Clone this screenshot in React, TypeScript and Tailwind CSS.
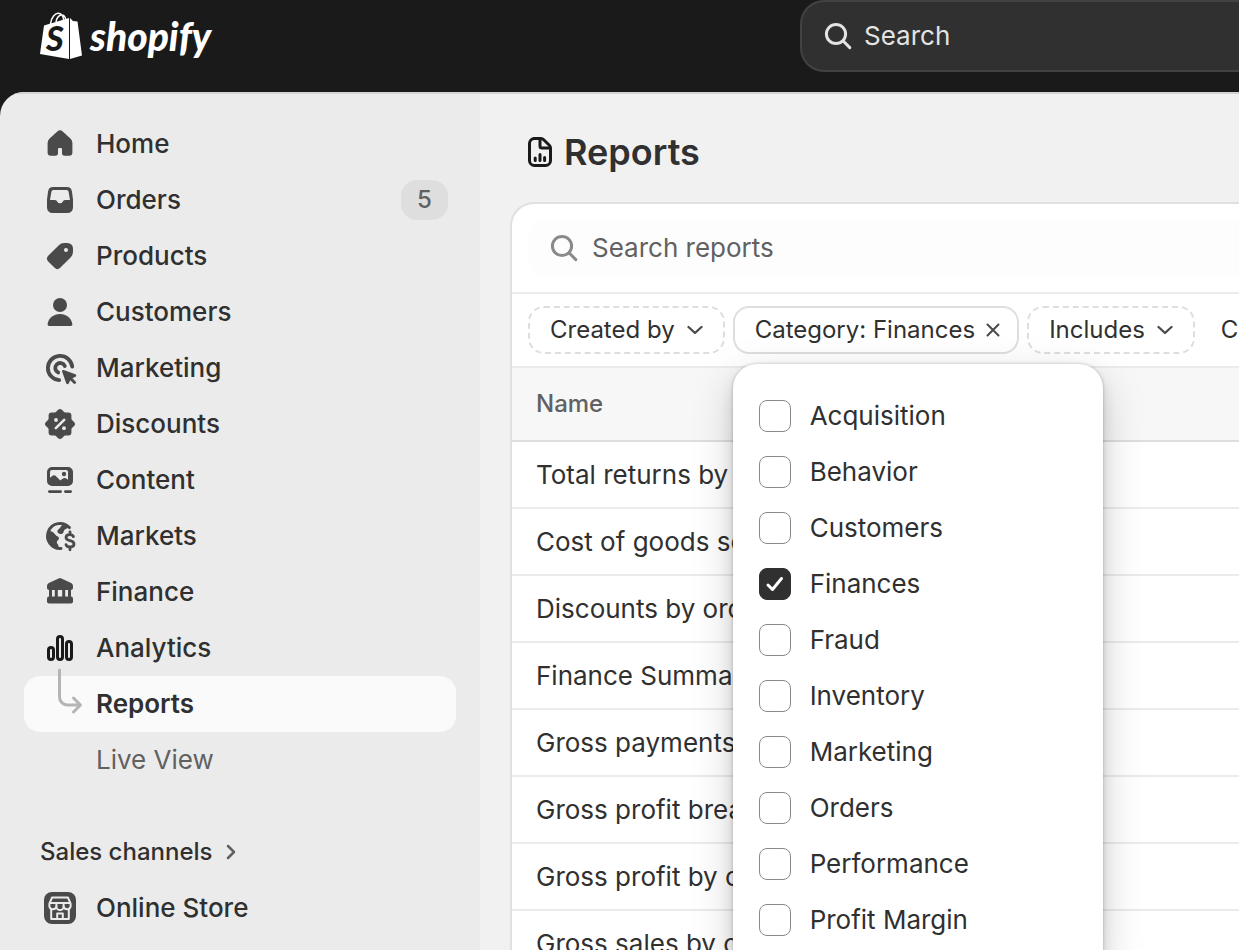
import { useState, type ReactNode } from 'react';

function Icon({ children, className = '' }: { children: ReactNode; className?: string }) {
  return (
    <svg viewBox="0 0 20 20" aria-hidden="true" className={`size-10 shrink-0 overflow-visible ${className}`} fill="currentColor">
      {children}
    </svg>
  );
}

const line = { fill: 'none', stroke: 'currentColor', strokeWidth: 1.5, strokeLinecap: 'round', strokeLinejoin: 'round' } as const;

const icons: Record<string, ReactNode> = {
  home: (
    <path d="M8.65 3.7a2 2 0 0 1 2.7 0l3.85 3.55a3 3 0 0 1 1 2.2v4.8a1.6 1.6 0 0 1-1.6 1.6h-2.3a1.3 1.3 0 0 1-1.3-1.3v-2.1a.5.5 0 0 0-.5-.5h-1a.5.5 0 0 0-.5.5v2.1a1.3 1.3 0 0 1-1.3 1.3h-2.3a1.6 1.6 0 0 1-1.6-1.6v-4.8a3 3 0 0 1 1-2.2z" />
  ),
  orders: (
    <path
      fillRule="evenodd"
      d="M6.6 3.5h6.8a2.6 2.6 0 0 1 2.57 2.2l.5 3.8.03.7v3.55a2.75 2.75 0 0 1-2.75 2.75h-7.5a2.75 2.75 0 0 1-2.75-2.75v-3.55l.03-.7.5-3.8a2.6 2.6 0 0 1 2.57-2.2zM6.7 5h6.6a1 1 0 0 1 1 .85l.7 4.15h-2.5a1.2 1.2 0 0 0-1.1.75 1.52 1.52 0 0 1-2.8 0 1.2 1.2 0 0 0-1.1-.75h-2.5l.7-4.15a1 1 0 0 1 1-.85z"
    />
  ),
  products: (
    <path
      fillRule="evenodd"
      d="M9.3 4.7a4 4 0 0 1 2.8-1.2h1.65a2.75 2.75 0 0 1 2.75 2.75v1.65a4 4 0 0 1-1.2 2.8l-5.2 5.2a2 2 0 0 1-2.8 0l-3.2-3.2a2 2 0 0 1 0-2.8zM13 8a1 1 0 1 0 0-2 1 1 0 0 0 0 2z"
    />
  ),
  customers: (
    <>
      <circle cx="10" cy="6.5" r="3.5" />
      <path d="M3.8 16.1c.4-3 3-5.1 6.2-5.1s5.8 2.1 6.2 5.1a.8.8 0 0 1-.8.9h-10.8a.8.8 0 0 1-.8-.9z" />
    </>
  ),
  marketing: (
    <>
      <path {...line} strokeWidth="1.9" d="M16.1 9.3a6.1 6.1 0 1 0-6.5 6.8" />
      <path {...line} strokeWidth="1.9" d="M12.4 9a2.5 2.5 0 1 0-3.3 3.3" />
      <path d="M11.8 11.02l5.9 2.05c.55.2.6.95.05 1.25l-1.55.8 1.6 1.65a.7.7 0 0 1-1 1l-1.65-1.6-.8 1.55c-.3.55-1.05.5-1.25-.05l-2.05-5.9a.6.6 0 0 1 .75-.75z" />
    </>
  ),
  discounts: (
    <>
      <rect x="4.3" y="4.3" width="11.4" height="11.4" rx="1.5" />
      <rect x="4.3" y="4.3" width="11.4" height="11.4" rx="1.5" transform="rotate(45 10 10)" />
      <path d="M7.9 12.1l4.2-4.2" stroke="#ebebeb" strokeWidth="1.3" strokeLinecap="round" />
      <circle cx="8" cy="8" r=".95" fill="#ebebeb" />
      <circle cx="12" cy="12.1" r=".95" fill="#ebebeb" />
    </>
  ),
  content: (
    <>
      <path
        fillRule="evenodd"
        d="M6 3.5h8a2.5 2.5 0 0 1 2.5 2.5v4.5a2.5 2.5 0 0 1-2.5 2.5h-8a2.5 2.5 0 0 1-2.5-2.5v-4.5a2.5 2.5 0 0 1 2.5-2.5zM6 5a1 1 0 0 0-1 1v2.9l.95-.8a1.6 1.6 0 0 1 2.2.1l2 2.1 1.1-.9a1.7 1.7 0 0 1 2.1 0l.65.5v-3.9a1 1 0 0 0-1-1z"
      />
      <circle cx="12" cy="7" r="1.1" />
      <path {...line} strokeWidth="1.4" d="M4.7 15.8h5.6M12.7 15.8h2.6" />
    </>
  ),
  markets: (
    <>
      <path {...line} d="M14.7 5.8a6.25 6.25 0 1 0-4.2 10.4" />
      <path d="M4 7.2c1.6.2 3 .9 3.6 2 .5.9 1.8.8 1.9 1.9 0 1-1.2 1.1-1.1 2.1.1.8.9 1 .9 2v1.3C5.8 16.4 3.2 13.6 3.4 10z" />
      <path d="M13.4 4c-1.3.1-2.7.5-3.2 1.6-.3.7-1.6 1.1-1.5 2.2.1 1.3 1.8 1.5 2.6.9.7-.5.4-1.3 1-1.8.7-.6 1.7-.8 2.1-1.7z" />
      <path {...line} strokeWidth="1.4" d="M16.7 10.3c-.3-.7-1-1-1.8-1-1.1 0-1.9.6-1.9 1.5 0 2.2 4 .9 4 3.2 0 1-.9 1.5-2 1.5-1 0-1.8-.4-2-1.2M15 9.2v-1.3M15 15.6v1.3" />
    </>
  ),
  finance: (
    <>
      <path d="M9.3 3.2a1.6 1.6 0 0 1 1.4 0l4.9 2.3a1.6 1.6 0 0 1 .9 1.45v.8a1.25 1.25 0 0 1-1.25 1.25h-10.5a1.25 1.25 0 0 1-1.25-1.25v-.8a1.6 1.6 0 0 1 .9-1.45z" />
      <path d="M4.5 8.5h1.5v4.5h-1.5zM7.4 8.5h1.5v4.5h-1.5zM11.1 8.5h1.5v4.5h-1.5zM14 8.5h1.5v4.5h-1.5z" />
      <rect x="3.5" y="12.3" width="13" height="3.5" rx="1" />
    </>
  ),
  analytics: (
    <g {...line} className="text-[#1a1a1a]">
      <rect x="4.25" y="9.75" width="2.5" height="6" rx="1.25" />
      <rect x="8.75" y="4.25" width="2.5" height="11.5" rx="1.25" />
      <rect x="13.25" y="6.75" width="2.5" height="9" rx="1.25" />
    </g>
  ),
  store: (
    <>
      <rect x="2" y="2" width="16" height="16" rx="4" />
      <g {...line} stroke="#ebebeb" strokeWidth="1">
        <path d="M6 4.8h8l1.3 3v1.4a1.8 1.8 0 0 1-3.5 0 1.8 1.8 0 0 1-3.6 0 1.8 1.8 0 0 1-3.5 0v-1.4z" />
        <path d="M5.2 7.5h9.6M8.2 7.5v1.7M11.8 7.5v1.7M5.6 10.7v4.8h8.8v-4.8M8.6 15.3v-2.6h2.8v2.6" />
      </g>
    </>
  ),
};

const nav = [
  { icon: 'home',      label: 'Home' },
  { icon: 'orders',    label: 'Orders', count: 5 },
  { icon: 'products',  label: 'Products' },
  { icon: 'customers', label: 'Customers' },
  { icon: 'marketing', label: 'Marketing' },
  { icon: 'discounts', label: 'Discounts' },
  { icon: 'content',   label: 'Content' },
  { icon: 'markets',   label: 'Markets' },
  { icon: 'finance',   label: 'Finance' },
  { icon: 'analytics', label: 'Analytics' },
];

const reports = [
  'Total returns by order',
  'Cost of goods sold',
  'Discounts by order',
  'Finance Summary',
  'Gross payments',
  'Gross profit breakdown',
  'Gross profit by order',
  'Gross sales by order',
];

const categories = [
  'Acquisition', 'Behavior', 'Customers', 'Finances', 'Fraud',
  'Inventory', 'Marketing', 'Orders', 'Performance', 'Profit Margin',
];

function SearchIcon({ className }: { className: string }) {
  return (
    <Icon className={className}>
      <path {...line} d="M13.8 9a4.8 4.8 0 1 1-9.6 0 4.8 4.8 0 0 1 9.6 0zM12.6 12.5l3.3 3.3" />
    </Icon>
  );
}

function Chevron() {
  return (
    <svg viewBox="0 0 16 10" aria-hidden="true" className="h-[10px] w-4 shrink-0 text-[#4a4a4a]">
      <path {...line} strokeWidth="2.3" d="M1.5 2l6.5 6 6.5-6" />
    </svg>
  );
}

function Logo() {
  return (
    <a href="#" className="flex items-start gap-2 text-white">
      <svg viewBox="0 0 42 48" aria-hidden="true" className="h-12 w-[42px]">
        <path d="M4 13.5L29 6v41L0 42z" fill="currentColor" />
        <path d="M30 6l3 3 4.5.6L42 43.5 30 47z" fill="currentColor" />
        <path d="M10.5 12C11 5 15.5 1 18.5 1.2c4 .3 5 4 5.2 7.3M16 10c.5-4 3-7 5.500-7 2.8 0 4 2.5 4.2 5" fill="none" stroke="currentColor" strokeWidth="1.5" />
        <text x="6" y="39" fill="#1a1a1a" className="font-[Lato,sans-serif] text-[34px] font-black italic">S</text>
      </svg>
      <span className="font-[Lato,sans-serif] text-[39px] leading-[49px] font-black italic">shopify</span>
    </a>
  );
}

function Sidebar() {
  return (
    <nav className="w-[480px] shrink-0 bg-[#ebebeb] px-6 pt-6 shadow-[inset_0_2px_0_#d4d4d4]">
      <ul className="font-[550]">
        {nav.map(item => (
          <li key={item.label}>
            <a href="#" className="flex h-14 items-center gap-4 px-4">
              <Icon className="text-[#4a4a4a]">{icons[item.icon]}</Icon>
              <span className="flex-1">{item.label}</span>
              {item.count && (
                <span className="-mr-2 flex h-10 w-[47px] items-center justify-center rounded-2xl bg-[#dedede] text-2xl text-[#616161]">
                  {item.count}
                </span>
              )}
            </a>
          </li>
        ))}
        <li>
          <a href="#" className="flex h-14 items-center gap-4 rounded-2xl bg-[#fafafa] px-4 font-semibold">
            {/* Connector from Analytics */}
            <svg viewBox="0 0 40 40" aria-hidden="true" className="size-10 overflow-visible text-[#b5b5b5]">
              <path {...line} strokeWidth="3" d="M19.5-14v27a8 8 0 0 0 8 8h12m-6-7l7 7-7 7" />
            </svg>
            Reports
          </a>
        </li>
        <li>
          <a href="#" className="flex h-14 items-center pl-[72px] font-normal text-[#616161]">Live View</a>
        </li>
      </ul>

      <button className="mt-9 flex h-14 items-center gap-[14px] px-4 text-2xl font-[550]">
        Sales channels
        <svg viewBox="0 0 10 16" aria-hidden="true" className="h-4 w-[10px] text-[#616161]">
          <path {...line} strokeWidth="2.5" d="M2 2l6 6-6 6" />
        </svg>
      </button>
      <a href="#" className="flex h-14 items-center gap-4 px-4 font-[550]">
        <Icon className="text-[#4a4a4a]">{icons.store}</Icon>
        Online Store
      </a>
    </nav>
  );
}

function CategoryMenu({ selected, onToggle }: { selected: string[]; onToggle: (name: string) => void }) {
  return (
    <div className="absolute top-[58px] left-0 z-10 w-[370px] rounded-3xl bg-white px-[26px] py-6 text-[26px] shadow-[0_0_3px_rgba(0,0,0,0.25),0_8px_14px_rgba(0,0,0,0.12),0_14px_44px_rgba(0,0,0,0.18)]">
      {categories.map(name => (
        <label key={name} className="flex h-14 items-center gap-[19px]">
          <span className="relative flex size-8 shrink-0">
            <input
              type="checkbox"
              checked={selected.includes(name)}
              onChange={() => onToggle(name)}
              className="peer size-8 appearance-none rounded-lg border border-[#8a8a8a] bg-white checked:border-[#303030] checked:bg-[#303030]"
            />
            <svg viewBox="0 0 32 32" aria-hidden="true" className="pointer-events-none absolute inset-0 hidden text-white peer-checked:block">
              <path {...line} strokeWidth="3" d="M9 17l4.5 4.5 9-11" />
            </svg>
          </span>
          {name}
        </label>
      ))}
    </div>
  );
}

export default function App() {
  const [selected, setSelected] = useState<string[]>(['Finances']);

  const toggle = (name: string) =>
    setSelected(s => (s.includes(name) ? s.filter(n => n !== name) : [...s, name]));

  return (
    <div className="flex h-screen flex-col overflow-hidden bg-[#1a1a1a] font-[Inter,sans-serif] text-[26px] leading-10 font-normal text-[#303030]">

      {/* Top bar */}
      <header className="flex h-[92px] shrink-0 items-start">
        <div className="w-[800px] shrink-0 pt-3 pl-10"><Logo /></div>
        <label className="flex h-[72px] min-w-0 flex-1 items-center gap-[6px] rounded-l-3xl border-2 border-r-0 border-[#424242] bg-[#303030] pl-4">
          <SearchIcon className="text-[#e3e3e3]" />
          <input
            type="search"
            aria-label="Search"
            placeholder="Search"
            className="min-w-0 flex-1 bg-transparent text-[#e3e3e3] outline-none placeholder:text-[#e3e3e3]"
          />
        </label>
      </header>

      <div className="flex min-h-0 flex-1 overflow-hidden rounded-tl-3xl">
        <Sidebar />

        <main className="min-w-0 flex-1 bg-[#f1f1f1] pt-10 pl-[30px] shadow-[inset_0_2px_0_#d4d4d4]">
          <h1 className="flex items-center gap-1 pl-[10px] text-4xl leading-10 font-semibold">
            <Icon className="text-[#1a1a1a]">
              <g {...line}>
                <path d="M6.75 3.25h3.7a2 2 0 0 1 1.4.6l2.8 2.8a2 2 0 0 1 .6 1.4v6.2a2.5 2.5 0 0 1-2.5 2.5h-5.5a2.5 2.5 0 0 1-2.5-2.5v-8.5a2.5 2.5 0 0 1 2.5-2.5z" />
                <path d="M10 3.5v3.5a1 1 0 0 0 1 1h4M7.6 13v1.2M10 11.3v2.9M12.3 12.7v1.5" />
              </g>
            </Icon>
            Reports
          </h1>

          <section className="mt-[30px] rounded-tl-3xl border-t-2 border-l-2 border-[#e0e0e0] bg-white">
            <div className="border-b-2 border-[#ebebeb] py-4 pl-4">
              <label className="flex h-14 items-center gap-2 rounded-l-2xl bg-[#fdfdfd] pl-4 text-[#616161]">
                <SearchIcon className="text-[#8a8a8a]" />
                <input
                  type="search"
                  aria-label="Search reports"
                  placeholder="Search reports"
                  className="min-w-0 flex-1 bg-transparent outline-none placeholder:text-[#616161]"
                />
              </label>
            </div>

            {/* Filters */}
            <div className="flex h-[74px] items-center gap-2 border-b-2 border-[#ebebeb] pl-4 text-2xl whitespace-nowrap">
              <button className="flex h-12 items-center gap-3 rounded-2xl border-2 border-dashed border-[#dedede] px-5">
                Created by <Chevron />
              </button>
              <div className="relative">
                <button
                  onClick={() => setSelected([])}
                  className="flex h-12 items-center gap-[10px] rounded-2xl border-2 border-[#dedede] px-5 pr-4"
                >
                  Category: Finances
                  <svg viewBox="0 0 16 16" aria-hidden="true" className="size-4 text-[#4a4a4a]">
                    <path {...line} strokeWidth="2" d="M2.5 2.5l11 11M13.5 2.5l-11 11" />
                  </svg>
                </button>
                <CategoryMenu selected={selected} onToggle={toggle} />
              </div>
              <button className="flex h-12 items-center gap-3 rounded-2xl border-2 border-dashed border-[#dedede] px-5">
                Includes <Chevron />
              </button>
              <button onClick={() => setSelected([])} className="px-[18px]">Clear all</button>
            </div>

            <table className="w-full border-collapse text-left">
              <thead>
                <tr className="h-[73px] border-b-2 border-[#dedede] bg-[#f7f7f7]">
                  <th scope="col" className="px-6 text-2xl font-[550] text-[#616161]">Name</th>
                </tr>
              </thead>
              <tbody>
                {reports.map(name => (
                  <tr key={name} className="h-[67px] border-b-2 border-[#ebebeb]">
                    <td className="px-6">{name}</td>
                  </tr>
                ))}
              </tbody>
            </table>
          </section>
        </main>
      </div>
    </div>
  );
}
